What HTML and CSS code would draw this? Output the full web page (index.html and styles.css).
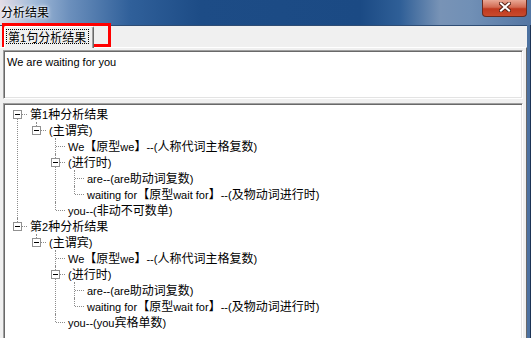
FILE: index.html
```html
<!DOCTYPE html>
<html lang="zh-cn">
<head>
  <meta charset="UTF-8">
  <title>分析结果</title>
  <link rel="stylesheet" href="styles.css">
</head>
<body>
  <div class="window">
    <div class="titlebar">
      <span class="title">分析结果</span>
      <div class="close">
        <svg width="12" height="10" viewBox="0 0 12 10">
          <path d="M2 1.5 L10 8.5 M10 1.5 L2 8.5" stroke="#5a2418" stroke-width="4" stroke-linecap="square"/>
          <path d="M2 1.5 L10 8.5 M10 1.5 L2 8.5" stroke="#fff" stroke-width="2" stroke-linecap="square"/>
        </svg>
      </div>
    </div>

    <div class="client">
      <div class="tabs">
        <div class="tab active">
          <span class="tab-label"><span class="zh">第</span>1<span class="zh">句分析结果</span></span>
        </div>
      </div>

      <div class="panel">
        <div class="edit">We are waiting for you</div>

        <div class="tree">
          <ul>
            <li>
              <div class="row"><i class="btn"></i><span class="zh">第</span>1<span class="zh">种分析结果</span></div>
              <ul>
                <li>
                  <div class="row"><i class="btn"></i>(<span class="zh">主谓宾</span>)</div>
                  <ul>
                    <li><div class="row">We<span class="zh">【原型</span>we<span class="zh">】</span>--(<span class="zh">人称代词主格复数</span>)</div></li>
                    <li>
                      <div class="row"><i class="btn"></i>(<span class="zh">进行时</span>)</div>
                      <ul>
                        <li><div class="row">are--(are<span class="zh">助动词复数</span>)</div></li>
                        <li><div class="row">waiting for<span class="zh">【原型</span>wait for<span class="zh">】</span>--(<span class="zh">及物动词进行时</span>)</div></li>
                      </ul>
                    </li>
                    <li><div class="row">you--(<span class="zh">非动不可数单</span>)</div></li>
                  </ul>
                </li>
              </ul>
            </li>
            <li>
              <div class="row"><i class="btn"></i><span class="zh">第</span>2<span class="zh">种分析结果</span></div>
              <ul>
                <li>
                  <div class="row"><i class="btn"></i>(<span class="zh">主谓宾</span>)</div>
                  <ul>
                    <li><div class="row">We<span class="zh">【原型</span>we<span class="zh">】</span>--(<span class="zh">人称代词主格复数</span>)</div></li>
                    <li>
                      <div class="row"><i class="btn"></i>(<span class="zh">进行时</span>)</div>
                      <ul>
                        <li><div class="row">are--(are<span class="zh">助动词复数</span>)</div></li>
                        <li><div class="row">waiting for<span class="zh">【原型</span>wait for<span class="zh">】</span>--(<span class="zh">及物动词进行时</span>)</div></li>
                      </ul>
                    </li>
                    <li><div class="row">you--(you<span class="zh">宾格单数</span>)</div></li>
                  </ul>
                </li>
              </ul>
            </li>
          </ul>
        </div>
      </div>
    </div>

    <!-- red annotation box around the tab -->
    <div class="mark"></div>
  </div>
</body>
</html>
```

FILE: styles.css
```css
body {
  margin: 0;
  font-family: "Liberation Sans", "Noto Sans CJK SC", sans-serif;
  font-size: 11px;
  color: #000;
  background: #f0f0f0;
}
.zh {
  font-family: "Noto Sans CJK SC", sans-serif;
  font-size: 12px;
}
.window {
  position: relative;
  width: 531px;
  height: 338px;
  overflow: hidden;
  display: flex;
  flex-direction: column;
  background: #4c71a0;
  box-shadow: inset -1px 0 #1d3456;
}

/* title bar */
.titlebar {
  height: 25px;
  flex: none;
  display: flex;
  justify-content: space-between;
  align-items: flex-start;
  background: linear-gradient(90deg, #e4dde6 0, #a9bfdb 30px, #6b8fbc 70px, #30609a 130px, #1d4c86 200px, #1b4a84 360px, #2f5f97 400px, #7893b6 440px, #7190b6 470px, #5476a3 531px);
}
.title {
  padding-left: 1px;
  line-height: 24px;
  font-family: "Noto Sans CJK SC", sans-serif;
  font-size: 12px;
  color: #000;
  text-shadow: 0 0 5px #fff, 0 0 3px #fff;
}
.close {
  width: 45px;
  height: 17px;
  margin-right: 4px;
  box-sizing: border-box;
  border: 1px solid #6b2a1e;
  border-top: none;
  border-radius: 0 0 4px 4px;
  background: linear-gradient(#e9a895, #d26a52 45%, #c0391f 55%, #c94a2c);
  display: flex;
  align-items: center;
  justify-content: center;
}
.close svg {
  display: block;
  margin-top: -2px;
}

/* client area */
.client {
  width: 527px;
  flex: 1;
  background: #f0f0f0;
  border-top: 1px solid #2f4d74;
}
.tabs {
  height: 21px;
  display: flex;
  padding-left: 4px;
}
.tab {
  position: relative;
  z-index: 1;
  height: 22px;
  width: 90px;
  box-sizing: border-box;
  border-top: 1px solid #fff;
  border-left: 1px solid #fff;
  border-right: 1px solid #696969;
  box-shadow: inset -1px 0 #a0a0a0;
  border-radius: 2px 2px 0 0;
  background: #f0f0f0;
}
.tab-label {
  display: inline-block;
  margin: 2px 0 0 1px;
  height: 15px;
  line-height: 13px;
  padding: 0 2px 0 1px;
  border: 1px dotted #000;
  box-sizing: border-box;
}
.panel {
  border-top: 1px solid #fff;
  border-right: 1px solid #696969;
  padding: 2px 3px 0 3px;
}
.edit,
.tree {
  background: #fff;
  border: 1px solid;
  border-color: #a0a0a0 #fff #fff #a0a0a0;
  box-shadow: inset 1px 1px #696969, inset -1px -1px #e3e3e3;
}
.edit {
  height: 49px;
  box-sizing: border-box;
  padding: 5px 3px 0;
  line-height: 13px;
}
.tree {
  margin-top: 4px;
  height: 260px;
  padding: 2px 0 0 3px;
}

/* tree view */
.tree ul {
  list-style: none;
  margin: 0;
  padding: 0;
}
.tree ul ul {
  padding-left: 19px;
}
.tree li {
  position: relative;
}
.tree li::before {
  content: "";
  position: absolute;
  left: 10px;
  top: 0;
  bottom: 0;
  border-left: 1px dotted #8c8c8c;
}
.tree li:last-child::before {
  bottom: auto;
  height: 8px;
}
.tree > ul > li:first-child::before {
  top: 8px;
}
.row {
  position: relative;
  height: 16px;
  line-height: 16px;
  padding-left: 23px;
  white-space: nowrap;
}
.row::before {
  content: "";
  position: absolute;
  left: 11px;
  top: 8px;
  width: 9px;
  border-top: 1px dotted #8c8c8c;
}
.btn {
  position: absolute;
  z-index: 1;
  left: 6px;
  top: 4px;
  width: 9px;
  height: 9px;
  box-sizing: border-box;
  border: 1px solid #919191;
  background: #fff;
}
.btn::after {
  content: "";
  position: absolute;
  left: 1px;
  top: 3px;
  width: 5px;
  height: 1px;
  background: #000;
}

.mark {
  position: absolute;
  left: 2px;
  top: 23px;
  width: 109px;
  height: 24px;
  box-sizing: border-box;
  border: 3px solid #f00;
}
```
